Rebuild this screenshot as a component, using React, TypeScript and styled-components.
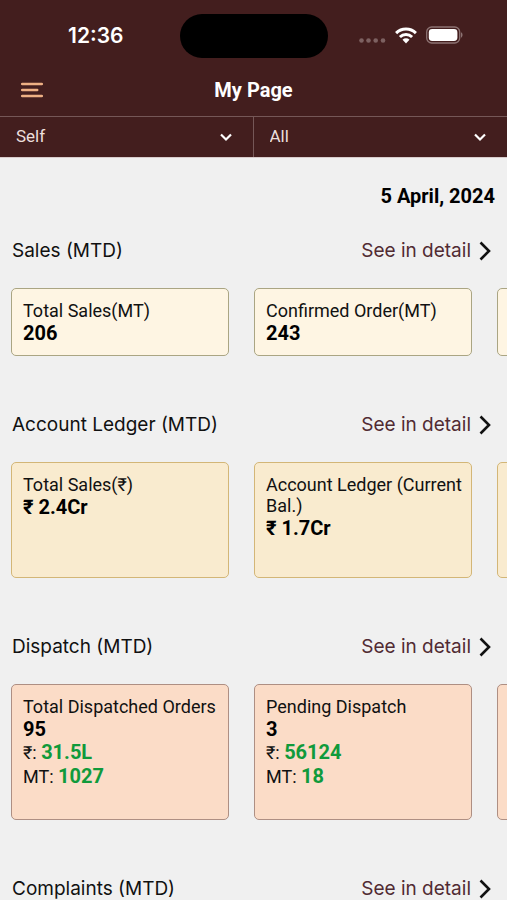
import React from "react";
import styled, { createGlobalStyle } from "styled-components";

const GlobalStyle = createGlobalStyle`
  *, *::before, *::after { box-sizing: border-box; }
  body {
    margin: 0;
    background: #f0f0f0;
    color: #111111;
    font-family: Roboto, "Liberation Sans", sans-serif;
  }
  h1, h2, p { margin: 0; }
`;

const Header = styled.header`
  background: #431e1e;
  color: #ffffff;
  border-bottom: 1px solid #d9cccc;
`;

const StatusBar = styled.div`
  display: grid;
  grid-template-columns: 1fr auto 1fr;
  align-items: center;
  height: 72px;
`;

const Clock = styled.time`
  justify-self: center;
  padding-left: 12px;
  font: 600 21px/28px Inter, sans-serif;
`;

const Island = styled.div`
  width: 148px;
  height: 44px;
  border-radius: 22px;
  background: #000000;
`;

const StatusIcons = styled.div`
  display: flex;
  align-items: center;
  justify-content: center;
  gap: 9px;
  padding-right: 14px;
  padding-bottom: 2px;
`;

const TitleBar = styled.div`
  display: grid;
  grid-template-columns: 48px 1fr 48px;
  align-items: center;
  height: 44px;
  padding-bottom: 8px;
`;

const MenuButton = styled.button`
  display: flex;
  justify-content: flex-end;
  padding: 0 5px 0 0;
  border: 0;
  background: none;
`;

const PageTitle = styled.h1`
  text-align: center;
  font-size: 20px;
  line-height: 24px;
  font-weight: 700;
`;

const Filters = styled.div`
  display: grid;
  grid-template-columns: 1fr 1fr;
  border-top: 1px solid #755757;
`;

const Filter = styled.label`
  display: grid;
  align-items: center;
  height: 40px;

  &:first-child { border-right: 1px solid #755757; }
  & > * { grid-area: 1 / 1; }
  svg {
    justify-self: end;
    margin-right: 20px;
    pointer-events: none;
  }
`;

const FilterSelect = styled.select`
  appearance: none;
  width: 100%;
  height: 40px;
  padding: 0 40px 2px 16px;
  border: 0;
  background: transparent;
  color: #ecdfdc;
  font: 400 17px/20px Roboto, sans-serif;
`;

const Content = styled.main`
  padding-top: 26px;
`;

const DateLine = styled.p`
  padding: 0 12px;
  margin-bottom: 31px;
  text-align: right;
  color: #000000;
  font-size: 20px;
  line-height: 24px;
  font-weight: 700;
`;

const Section = styled.section`
  & + & { margin-top: 57px; }
`;

const SectionHead = styled.div`
  display: flex;
  align-items: center;
  justify-content: space-between;
  padding: 0 16px 0 12px;
  font: 400 19px/24px Inter, sans-serif;
`;

const SectionTitle = styled.h2`
  font: inherit;
`;

const DetailLink = styled.a`
  display: flex;
  align-items: center;
  gap: 8px;
  color: #512b33;
  text-decoration: none;
`;

const CardRow = styled.div`
  display: grid;
  grid-auto-flow: column;
  grid-auto-columns: 43vw;
  gap: 25px;
  margin-top: 25px;
  padding: 0 11px;
  overflow-x: auto;
  scrollbar-width: none;
`;

type Tone = "cream" | "sand" | "peach";

const tones: Record<Tone, { fill: string; line: string; minHeight: number }> = {
  cream: { fill: "#fef5e3", line: "#aaa583", minHeight: 68 },
  sand: { fill: "#f9ebcf", line: "#d3b677", minHeight: 116 },
  peach: { fill: "#fbdcc7", line: "#ae8f83", minHeight: 136 },
};

const Card = styled.article<{ $tone: Tone }>`
  min-height: ${(p) => tones[p.$tone].minHeight}px;
  padding: 11px 4px 9px 11px;
  border: 1px solid ${(p) => tones[p.$tone].line};
  border-radius: 5px;
  background: ${(p) => tones[p.$tone].fill};
`;

const CardLabel = styled.p`
  font-size: 18px;
  line-height: 21px;
`;

const CardValue = styled.p`
  color: #000000;
  font-size: 20px;
  line-height: 24px;
  font-weight: 700;
`;

const CardDetail = styled.p`
  font-size: 18px;
  line-height: 24px;

  strong {
    color: #109a3b;
    font-size: 20px;
    line-height: 20px;
    font-weight: 700;
  }
`;

const DownArrow = () => (
  <svg width="14" height="10" viewBox="0 0 14 10" fill="none" aria-hidden="true">
    <path d="M2 2.5 7 7.5 12 2.5" stroke="#fff" strokeWidth="2.2" />
  </svg>
);

const RightArrow = () => (
  <svg width="12" height="20" viewBox="0 0 12 20" fill="none" aria-hidden="true">
    <path d="M1.5 1.5 10 10 1.5 18.5" stroke="#111" strokeWidth="2.6" />
  </svg>
);

const SignalDots = () => (
  <svg width="28" height="18" viewBox="0 0 28 18" fill="#7d6161" aria-hidden="true">
    <circle cx="3.5" cy="14.5" r="2.3" />
    <circle cx="10.5" cy="14.5" r="2.3" />
    <circle cx="17.7" cy="14.5" r="2.3" />
    <circle cx="25" cy="14.5" r="2.3" />
  </svg>
);

const Wifi = () => (
  <svg width="22" height="17" viewBox="0 0 22 17" aria-hidden="true">
    <g fill="none" stroke="#fff" strokeWidth="3">
      <path d="M1.1 6.1a14.2 14.2 0 0 1 19.8 0" />
      <path d="M4.9 10a8.8 8.8 0 0 1 12.2 0" />
    </g>
    <path d="M7.5 12.8a5 5 0 0 1 7 0L11 16.5Z" fill="#fff" />
  </svg>
);

const Battery = () => (
  <svg width="37" height="18" viewBox="0 0 37 18" aria-hidden="true">
    <rect x="0.7" y="1" width="33" height="16" rx="5" fill="none" stroke="#8d7373" strokeWidth="1.3" />
    <rect x="2.8" y="3.1" width="28.6" height="11.8" rx="3.4" fill="#fff" />
    <path d="M35 6.3c2 .9 2 4.5 0 5.4Z" fill="#8d7373" />
  </svg>
);

const MenuLines = () => (
  <svg width="22" height="16" viewBox="0 0 22 16" fill="none" aria-hidden="true">
    <path d="M1.2 2h19.6M1.2 8h15M1.2 14h19.6" stroke="#eeb084" strokeWidth="2.5" strokeLinecap="round" />
  </svg>
);

interface CardData {
  label: string;
  value: string;
  details?: [string, string][];
}

interface SectionData {
  title: string;
  tone?: Tone;
  cards: CardData[];
}

const sections: SectionData[] = [
  {
    title: "Sales (MTD)",
    tone: "cream",
    cards: [
      { label: "Total Sales(MT)", value: "206" },
      { label: "Confirmed Order(MT)", value: "243" },
    ],
  },
  {
    title: "Account Ledger (MTD)",
    tone: "sand",
    cards: [
      { label: "Total Sales(₹)", value: "₹ 2.4Cr" },
      { label: "Account Ledger (Current Bal.)", value: "₹ 1.7Cr" },
    ],
  },
  {
    title: "Dispatch (MTD)",
    tone: "peach",
    cards: [
      { label: "Total Dispatched Orders", value: "95", details: [["₹:", "31.5L"], ["MT:", "1027"]] },
      { label: "Pending Dispatch", value: "3", details: [["₹:", "56124"], ["MT:", "18"]] },
    ],
  },
  { title: "Complaints (MTD)", cards: [] },
];

const FilterField = ({ name, value }: { name: string; value: string }) => (
  <Filter>
    <FilterSelect aria-label={name} defaultValue={value}>
      <option>{value}</option>
    </FilterSelect>
    <DownArrow />
  </Filter>
);

export default function App() {
  return (
    <>
      <GlobalStyle />
      <Header>
        <StatusBar>
          <Clock>12:36</Clock>
          <Island />
          <StatusIcons>
            <SignalDots />
            <Wifi />
            <Battery />
          </StatusIcons>
        </StatusBar>
        <TitleBar>
          <MenuButton type="button" aria-label="Menu">
            <MenuLines />
          </MenuButton>
          <PageTitle>My Page</PageTitle>
        </TitleBar>
        <Filters>
          <FilterField name="Team" value="Self" />
          <FilterField name="Category" value="All" />
        </Filters>
      </Header>
      <Content>
        <DateLine>5 April, 2024</DateLine>
        {sections.map(({ title, tone, cards }) => (
          <Section key={title}>
            <SectionHead>
              <SectionTitle>{title}</SectionTitle>
              <DetailLink href="#">
                See in detail
                <RightArrow />
              </DetailLink>
            </SectionHead>
            {tone && (
              <CardRow>
                {cards.map((card) => (
                  <Card key={card.label} $tone={tone}>
                    <CardLabel>{card.label}</CardLabel>
                    <CardValue>{card.value}</CardValue>
                    {card.details?.map(([unit, amount]) => (
                      <CardDetail key={unit}>
                        {unit} <strong>{amount}</strong>
                      </CardDetail>
                    ))}
                  </Card>
                ))}
                <Card $tone={tone} aria-hidden="true" />
              </CardRow>
            )}
          </Section>
        ))}
      </Content>
    </>
  );
}
